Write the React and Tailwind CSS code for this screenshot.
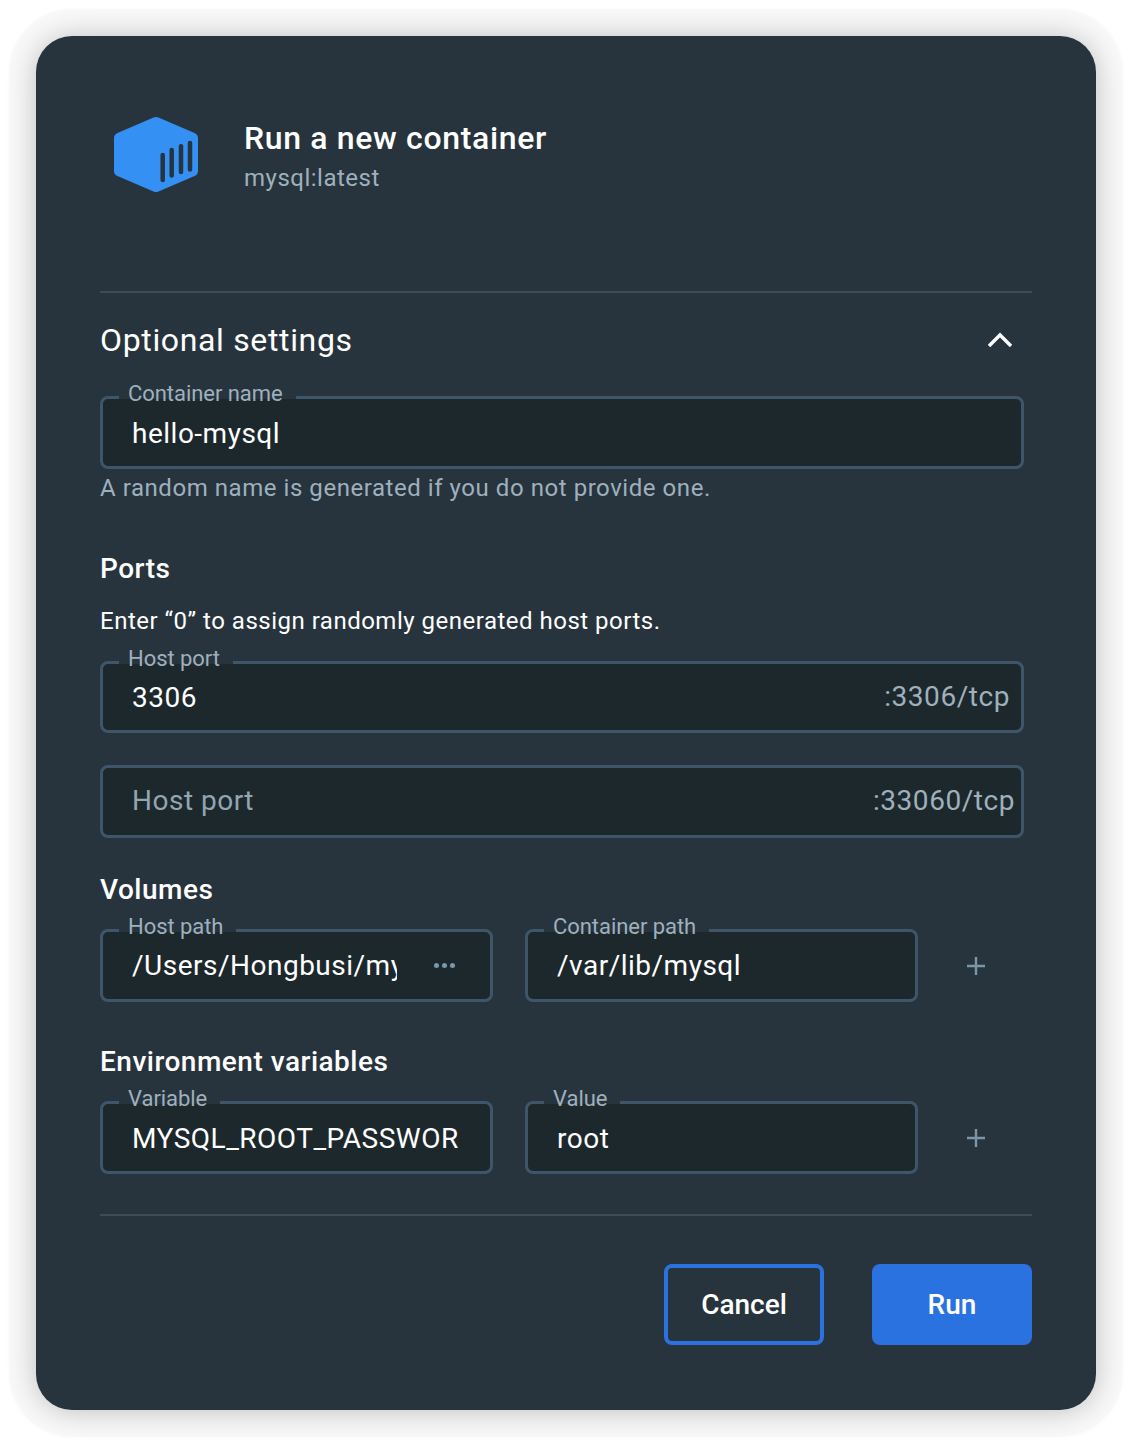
const font = { fontFamily: "Roboto, sans-serif" };

function Field({ label, value, placeholder, suffix, suffixPad = "pr-[11px]", textPad = "pt-[2px]", width, height = "h-[72px]", children }) {
    return (
        <div className={`relative ${height} ${width} shrink-0 rounded-lg border-[3px] border-[#3f566a] bg-[#1d282d] flex items-center`}>
            {label && (
                <span className="absolute left-[16px] top-[-3px] h-[3px] bg-[#27343d] pl-[9px] pr-[13px]">
                    <span className="block mt-[-15px] text-[22px] leading-[26px] tracking-[-0.05px] text-[#9fb0bd] whitespace-nowrap">{label}</span>
                </span>
            )}
            {children}
            {!children && (
                <span className={`pl-[29px] text-[28px] leading-[34px] tracking-[0.5px] whitespace-nowrap ${value ? `${textPad} text-white` : "pb-[2px] text-[#94a5b2]"}`}>
                    {value || placeholder}
                </span>
            )}
            {suffix && (
                <span className={`ml-auto ${suffixPad} ${value ? "" : "pb-[2px]"} text-[28px] leading-[34px] tracking-[0.55px] text-[#9fb0bd] whitespace-nowrap`}>{suffix}</span>
            )}
        </div>
    );
}

function Plus() {
    return (
        <svg width="20" height="20" viewBox="0 0 20 20" className="ml-[48px] mt-[1px]">
            <path d="M10 1v18M1 10h18" stroke="#7a96ad" strokeWidth="2.4" fill="none" />
        </svg>
    );
}

function Heading({ children, className }) {
    return <h3 className={`text-[28px] leading-[34px] font-medium tracking-[0.5px] text-white ${className}`}>{children}</h3>;
}

export default function App() {
    return (
        <div className="min-h-[1446px] bg-white p-9" style={font}>
            <div className="flex h-[1374px] w-[1060px] flex-col rounded-[36px] bg-[#27343d] px-16 shadow-[0_1px_30px_rgba(0,0,0,0.24),0_0_2px_27px_#f9f9f9]">
                <div className="flex h-[257px] items-start border-b-2 border-[#3d4c59] pt-[81px] pl-[14px]">
                    <svg width="84" height="75" viewBox="0 0 84 75" className="mt-[0.3px]">
                        <path
                            fill="#3590f3"
                            d="M39.500 0.600q2.500-1 5 0l36 15.500q3.500 1.500 3.500 5v32.800q0 3.500-3.500 5l-36 15.500q-2.500 1-5 0l-36-15.500q-3.500-1.500-3.500-5v-32.800q0-3.500 3.500-5z"
                        />
                        <g stroke="#27343d" strokeWidth="4.500" strokeLinecap="round">
                            <path d="M48.700 38v25" />
                            <path d="M57.700 33v25.500" />
                            <path d="M67 29.300v25.700" />
                            <path d="M76 26v26.400" />
                        </g>
                    </svg>
                    <div className="ml-[46px]">
                        <div className="text-[32px] leading-[38px] font-medium tracking-[0.65px] text-white mt-[2px]">Run a new container</div>
                        <div className="mt-[7px] text-[24px] leading-[28px] tracking-[0.5px] text-[#9fb0bd]">mysql:latest</div>
                    </div>
                </div>

                <div className="mt-[28px] flex items-center justify-between pr-[19px]">
                    <span className="text-[32px] leading-[38px] tracking-[0.65px] text-white">Optional settings</span>
                    <svg width="26" height="16" viewBox="0 0 26 16">
                        <path d="M2 14 13 3l11 11" stroke="#fff" strokeWidth="3.400" fill="none" />
                    </svg>
                </div>

                <div className="mt-[37px]">
                    <Field label="Container name" value="hello-mysql" textPad="pt-[3px]" width="w-[924px]" height="h-[73px]" />
                </div>
                <p className="mt-[5px] text-[24px] leading-[28px] tracking-[0.55px] text-[#9fb0bd]">A random name is generated if you do not provide one.</p>

                <Heading className="mt-[50px]">Ports</Heading>
                <p className="mt-[21px] text-[24px] leading-[28px] tracking-[0.5px] text-white">Enter “0” to assign randomly generated host ports.</p>
                <div className="mt-[26px] flex flex-col gap-[32px]">
                    <Field label="Host port" value="3306" suffix=":3306/tcp" width="w-[924px]" />
                    <Field placeholder="Host port" suffix=":33060/tcp" suffixPad="pr-[6px]" width="w-[924px]" height="h-[73px]" />
                </div>

                <Heading className="mt-[35px]">Volumes</Heading>
                <div className="mt-[22px] flex items-center gap-[32px]">
                    <Field label="Host path" width="w-[393px]" height="h-[73px]">
                        <span className="ml-[29px] w-[265px] overflow-hidden text-[28px] leading-[34px] tracking-[0.5px] text-white whitespace-nowrap">/Users/Hongbusi/mysql</span>
                        <span className="ml-[37px] flex gap-[3px]">
                            <i className="size-[5px] rounded-full bg-[#7b96ad]" />
                            <i className="size-[5px] rounded-full bg-[#7b96ad]" />
                            <i className="size-[5px] rounded-full bg-[#7b96ad]" />
                        </span>
                    </Field>
                    <div className="flex items-center">
                        <Field label="Container path" value="/var/lib/mysql" textPad="pt-0" width="w-[393px]" height="h-[73px]" />
                        <Plus />
                    </div>
                </div>

                <Heading className="mt-[43px]">Environment variables</Heading>
                <div className="mt-[22px] flex items-center gap-[32px]">
                    <Field label="Variable" width="w-[393px]" height="h-[73px]">
                        <span className="ml-[29px] w-[327px] overflow-hidden pt-[3px] text-[28px] leading-[34px] tracking-[0.5px] text-white whitespace-nowrap">MYSQL_ROOT_PASSWORD</span>
                    </Field>
                    <div className="flex items-center">
                        <Field label="Value" value="root" textPad="pt-[3px]" width="w-[393px]" height="h-[73px]" />
                        <Plus />
                    </div>
                </div>

                <div className="mt-[40px] border-t-2 border-[#3d4c59] pt-[48px] flex justify-end gap-[48px]">
                    <button className="h-[81px] w-[160px] rounded-lg border-4 border-[#2a72e0] text-[28px] font-medium text-white">Cancel</button>
                    <button className="h-[81px] w-[160px] rounded-lg bg-[#2a72e0] text-[28px] font-medium text-white">Run</button>
                </div>
            </div>
        </div>
    );
}
